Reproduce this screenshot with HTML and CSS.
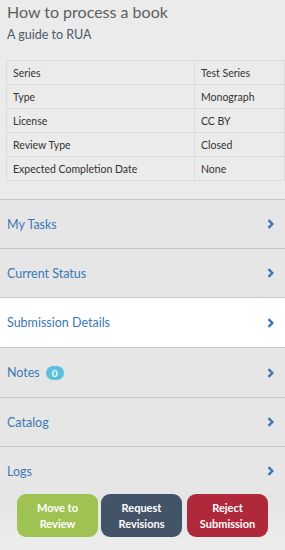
FILE: index.html
```html
<!DOCTYPE html>
<html lang="en">
<head>
  <meta charset="UTF-8">
  <meta name="viewport" content="width=device-width, initial-scale=1.0">
  <title>How to process a book</title>
  <link rel="stylesheet" href="styles.css">
</head>
<body>
  <div class="header">
    <h1>How to process a book</h1>
    <h2>A guide to RUA</h2>
  </div>

  <table class="info">
    <tr><td>Series</td><td>Test Series</td></tr>
    <tr><td>Type</td><td>Monograph</td></tr>
    <tr><td>License</td><td>CC BY</td></tr>
    <tr><td>Review Type</td><td>Closed</td></tr>
    <tr><td>Expected Completion Date</td><td>None</td></tr>
  </table>

  <ul class="nav">
    <li><a href="#">My Tasks</a><svg class="chev" viewBox="0 0 7 10"><polyline points="1.5,1.2 5.3,5 1.5,8.8"/></svg></li>
    <li><a href="#">Current Status</a><svg class="chev" viewBox="0 0 7 10"><polyline points="1.5,1.2 5.3,5 1.5,8.8"/></svg></li>
    <li class="active tall"><a href="#">Submission Details</a><svg class="chev" viewBox="0 0 7 10"><polyline points="1.5,1.2 5.3,5 1.5,8.8"/></svg></li>
    <li class="tall"><a href="#">Notes <span class="badge">0</span></a><svg class="chev" viewBox="0 0 7 10"><polyline points="1.5,1.2 5.3,5 1.5,8.8"/></svg></li>
    <li><a href="#">Catalog</a><svg class="chev" viewBox="0 0 7 10"><polyline points="1.5,1.2 5.3,5 1.5,8.8"/></svg></li>
    <li><a href="#">Logs</a><svg class="chev" viewBox="0 0 7 10"><polyline points="1.5,1.2 5.3,5 1.5,8.8"/></svg></li>
  </ul>

  <div class="actions">
    <button class="btn green">Move to<br>Review</button>
    <button class="btn dark">Request<br>Revisions</button>
    <button class="btn red">Reject<br>Submission</button>
  </div>
</body>
</html>
```

FILE: styles.css
```css
body {
  font-family: Lato, "Open Sans", sans-serif;
  margin: 0;
  background: #ebebeb;
  width: 285px;
}
.header {
  padding: 2px 7px 0;
}
.header h1 {
  margin: 0;
  font-size: 16px;
  font-weight: normal;
  color: #5e5e5e;
  line-height: 20px;
}
.header h2 {
  margin: 5px 0 0;
  font-size: 12.5px;
  font-weight: normal;
  color: #4f5a66;
  line-height: 16px;
}
.info {
  margin: 17px 0 0 6px;
  width: 279px;
  border-collapse: collapse;
  font-size: 10.5px;
  color: #333;
}
.info td {
  border: 1px solid #dcdcdc;
  height: 23px;
  padding: 0 6px;
  line-height: 14px;
}
.info td:last-child {
  width: 77px;
}
.nav {
  list-style: none;
  margin: 18px 0 0;
  padding: 0;
  border-top: 1px solid #c6c6c6;
}
.nav li {
  display: flex;
  align-items: center;
  justify-content: space-between;
  height: 48px;
  padding: 0 11px 0 7px;
  background: #e6e6e6;
  border-bottom: 1px solid #c6c6c6;
}
.nav li.tall {
  height: 49px;
}
.nav li.active {
  background: #fff;
}
.nav a {
  color: #3b78b5;
  font-size: 12.5px;
  text-decoration: none;
  display: flex;
  align-items: center;
}
.badge {
  display: inline-block;
  background: #5bc0de;
  color: #fff;
  font-size: 10px;
  font-weight: bold;
  border-radius: 8px;
  padding: 1px 6px;
  margin-left: 6px;
  line-height: 12px;
}
.chev {
  width: 7px;
  height: 10px;
}
.chev polyline {
  fill: none;
  stroke: #3b78b5;
  stroke-width: 2.4;
}
.actions {
  display: flex;
  justify-content: center;
  gap: 3px;
  margin-top: -2px;
  padding: 0 0 12px;
  background: linear-gradient(#e4e4e4, #ededed);
}
.btn {
  width: 81px;
  height: 43px;
  border: none;
  border-radius: 9px;
  color: #fff;
  font-family: Lato, "Open Sans", sans-serif;
  font-size: 11px;
  font-weight: bold;
  line-height: 16px;
  padding: 0;
}
.btn.green { background: #9fc353; }
.btn.dark { background: #445468; }
.btn.red { background: #b0293b; margin-left: 2px; }
```
